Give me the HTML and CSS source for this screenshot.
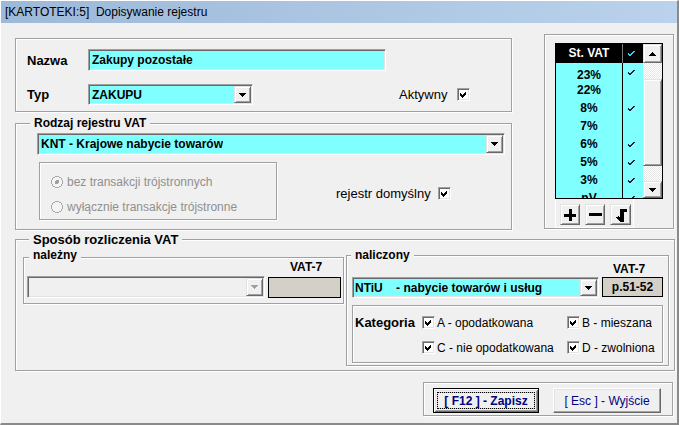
FILE: index.html
```html
<!DOCTYPE html>
<html lang="pl">
<head>
<meta charset="utf-8">
<title>Dopisywanie rejestru</title>
<link rel="stylesheet" href="styles.css">
</head>
<body>
<div class="window">
  <div class="titlebar">[KARTOTEKI:5]&nbsp; Dopisywanie rejestru</div>
  <div class="client">
    <div class="top">
      <div class="leftcol">
        <div class="group g-name">
          <div class="row r1">
            <span class="lbl">Nazwa</span>
            <div class="edit cyan w-nazwa">Zakupy pozostałe</div>
          </div>
          <div class="row r2">
            <span class="lbl">Typ</span>
            <div class="combo cyan w-typ"><span class="cval">ZAKUPU</span><span class="ddbtn"><svg width="7" height="4" viewBox="0 0 7 4"><path d="M0 0h7L3.5 4z" fill="#000"/></svg></span></div>
            <span class="txt aktyw">Aktywny</span>
            <span class="chk"><svg width="7" height="7" viewBox="0 0 7 7"><polygon points="0,2 2,4 6,0 6,3 2,7 0,5" fill="#000"/></svg></span>
          </div>
        </div>
        <div class="group g-rodzaj">
          <span class="legend lg-rodzaj">Rodzaj rejestru VAT</span>
          <div class="combo cyan w-knt"><span class="cval">KNT - Krajowe nabycie towarów</span><span class="ddbtn"><svg width="7" height="4" viewBox="0 0 7 4"><path d="M0 0h7L3.5 4z" fill="#000"/></svg></span></div>
          <div class="row r3">
            <div class="radiobox">
              <div class="radio"><svg width="12" height="12" viewBox="0 0 12 12"><circle cx="6" cy="6" r="5.5" fill="#f4f4f4" stroke="#a8a8a8"/><circle cx="6" cy="6" r="2" fill="#a0a0a0"/></svg><span>bez transakcji trójstronnych</span></div>
              <div class="radio"><svg width="12" height="12" viewBox="0 0 12 12"><circle cx="6" cy="6" r="5.5" fill="#f4f4f4" stroke="#a8a8a8"/></svg><span>wyłącznie transakcje trójstronne</span></div>
            </div>
            <div class="domysl">
              <span class="txt">rejestr domyślny</span>
              <span class="chk"><svg width="7" height="7" viewBox="0 0 7 7"><polygon points="0,2 2,4 6,0 6,3 2,7 0,5" fill="#000"/></svg></span>
            </div>
          </div>
        </div>
      </div>
      <div class="group g-stawki">
        <div class="grid">
          <div class="gtable">
            <div class="grow ghead"><span class="c1">St. VAT</span><span class="c2"><svg width="8" height="7" viewBox="0 0 8 7"><polyline points="0.8,3.5 3,5.8 7.2,1" fill="none" stroke="#33ccff" stroke-width="1.4"/></svg></span></div>
            <div class="grow first"><span class="c1">23%</span><span class="c2"><svg width="8" height="7" viewBox="0 0 8 7"><polyline points="0.8,3.5 3,5.8 7.2,1" fill="none" stroke="#1a1a50" stroke-width="1.2"/></svg></span></div>
            <div class="grow"><span class="c1">22%</span><span class="c2"></span></div>
            <div class="grow"><span class="c1">8%</span><span class="c2"><svg width="8" height="7" viewBox="0 0 8 7"><polyline points="0.8,3.5 3,5.8 7.2,1" fill="none" stroke="#1a1a50" stroke-width="1.2"/></svg></span></div>
            <div class="grow"><span class="c1">7%</span><span class="c2"></span></div>
            <div class="grow"><span class="c1">6%</span><span class="c2"><svg width="8" height="7" viewBox="0 0 8 7"><polyline points="0.8,3.5 3,5.8 7.2,1" fill="none" stroke="#1a1a50" stroke-width="1.2"/></svg></span></div>
            <div class="grow"><span class="c1">5%</span><span class="c2"><svg width="8" height="7" viewBox="0 0 8 7"><polyline points="0.8,3.5 3,5.8 7.2,1" fill="none" stroke="#1a1a50" stroke-width="1.2"/></svg></span></div>
            <div class="grow"><span class="c1">3%</span><span class="c2"><svg width="8" height="7" viewBox="0 0 8 7"><polyline points="0.8,3.5 3,5.8 7.2,1" fill="none" stroke="#1a1a50" stroke-width="1.2"/></svg></span></div>
            <div class="grow"><span class="c1">nV</span><span class="c2"><svg width="8" height="7" viewBox="0 0 8 7"><polyline points="0.8,3.5 3,5.8 7.2,1" fill="none" stroke="#1a1a50" stroke-width="1.2"/></svg></span></div>
          </div>
          <div class="vscroll">
            <span class="sbtn sb-up"><svg width="7" height="4" viewBox="0 0 7 4"><path d="M0 4h7L3.5 0z" fill="#000"/></svg></span>
            <span class="track t1"></span>
            <span class="sbtn thumb"></span>
            <span class="track t2"></span>
            <span class="sbtn sb-down"><svg width="7" height="4" viewBox="0 0 7 4"><path d="M0 0h7L3.5 4z" fill="#000"/></svg></span>
          </div>
        </div>
        <div class="gbtns">
          <span class="tbtn"><svg width="12" height="12" viewBox="0 0 12 12"><path d="M4.5 0h3v4.5H12v3H7.5V12h-3V7.5H0v-3h4.5z" fill="#000"/></svg></span>
          <span class="tbtn"><svg width="13" height="3" viewBox="0 0 13 3"><rect width="13" height="3" fill="#000"/></svg></span>
          <span class="tbtn tw"><svg width="12" height="14" viewBox="0 0 12 14"><path d="M5 1h7v3H9V14H5.5L1.5 9.5 3.5 8 5 9.8V1z" fill="#000"/></svg></span>
        </div>
      </div>
    </div>

    <div class="group g-sposob">
      <span class="legend lg-sposob">Sposób rozliczenia VAT</span>
      <div class="group g-nalezny">
        <span class="legend lg-nalezny">należny</span>
        <div class="vat7 v-a">VAT-7</div>
        <div class="nrow">
          <div class="combo dis w-nal"><span class="cval"></span><span class="ddbtn"><svg width="7" height="4" viewBox="0 0 7 4"><path d="M0 0h7L3.5 4z" fill="#a0a0a0"/></svg></span></div>
          <div class="pbox pb-a"></div>
        </div>
      </div>
      <div class="group g-naliczony">
        <span class="legend lg-naliczony">naliczony</span>
        <div class="vat7 v-b">VAT-7</div>
        <div class="nrow nrow-b">
          <div class="combo cyan w-nalicz"><span class="cval pre">NTiU    - nabycie towarów i usług</span><span class="ddbtn"><svg width="7" height="4" viewBox="0 0 7 4"><path d="M0 0h7L3.5 4z" fill="#000"/></svg></span></div>
          <div class="pbox pb-b">p.51-52</div>
        </div>
        <div class="katbox">
          <span class="katlbl">Kategoria</span>
          <span class="citem"><span class="chk"><svg width="7" height="7" viewBox="0 0 7 7"><polygon points="0,2 2,4 6,0 6,3 2,7 0,5" fill="#000"/></svg></span>A - opodatkowana</span>
          <span class="citem"><span class="chk"><svg width="7" height="7" viewBox="0 0 7 7"><polygon points="0,2 2,4 6,0 6,3 2,7 0,5" fill="#000"/></svg></span>B - mieszana</span>
          <span></span>
          <span class="citem"><span class="chk"><svg width="7" height="7" viewBox="0 0 7 7"><polygon points="0,2 2,4 6,0 6,3 2,7 0,5" fill="#000"/></svg></span>C - nie opodatkowana</span>
          <span class="citem"><span class="chk"><svg width="7" height="7" viewBox="0 0 7 7"><polygon points="0,2 2,4 6,0 6,3 2,7 0,5" fill="#000"/></svg></span>D - zwolniona</span>
        </div>
      </div>
    </div>

    <div class="group btnbar">
      <span class="btn btn-def"><span class="focus">[ F12 ] - Zapisz</span></span>
      <span class="btn btn-esc">[ Esc ] - Wyjście</span>
    </div>
  </div>
</div>
</body>
</html>
```

FILE: styles.css
```css
* { box-sizing: border-box; }
body {
  margin: 0;
  font-family: "Liberation Sans", Arial, sans-serif;
  font-size: 12px;
  color: #000;
  background: #f0f0f0;
}
svg { display: block; shape-rendering: crispEdges; }
.window {
  width: 679px;
  height: 425px;
  border-style: solid;
  border-width: 1px 2px 2px 1px;
  border-color: #fff #8a8a8a #8a8a8a #fff;
  background: #f0f0f0;
  overflow: hidden;
}
.titlebar {
  height: 22px;
  line-height: 22px;
  padding-left: 4px;
  background: linear-gradient(to right, #9db9d9, #bad2eb);
  font-size: 12px;
  white-space: nowrap;
}
.client { padding: 11px 0 0 14px; }
.top { display: flex; align-items: flex-start; }
.leftcol { width: 497px; margin-top: 4px; }

.group {
  position: relative;
  border: 1px solid #a0a0a0;
  box-shadow: 1px 1px 0 #fff, inset 1px 1px 0 #fff;
}
.legend {
  position: absolute;
  background: #f0f0f0;
  padding: 0 4px;
  font-weight: bold;
  line-height: 14px;
  white-space: nowrap;
}

.g-name { height: 74px; padding: 10px 0 0 11px; }
.row { display: flex; align-items: center; }
.r1 { height: 22px; }
.r2 { height: 21px; margin-top: 13px; }
.lbl { width: 61px; font-size: 13px; font-weight: bold; }
.txt { font-size: 13px; white-space: nowrap; }
.aktyw { margin-left: 146px; margin-right: 10px; }

.edit, .combo {
  display: flex;
  align-items: center;
  border: 1px solid;
  border-color: #a0a0a0 #fff #fff #a0a0a0;
  box-shadow: inset 1px 1px 0 #696969, inset -1px -1px 0 #e3e3e3;
  font-weight: bold;
  font-size: 12px;
  white-space: nowrap;
}
.edit { padding-left: 3px; }
.combo { padding: 1px 1px 1px 3px; justify-content: space-between; }
.cyan { background: #80ffff; }
.dis { background: #f0f0f0; }
.pre { white-space: pre; }
.cval { overflow: hidden; }
.ddbtn {
  flex: none;
  width: 17px;
  height: 100%;
  display: flex;
  align-items: center;
  justify-content: center;
  background: #f0f0f0;
  border: 1px solid;
  border-color: #e3e3e3 #696969 #696969 #e3e3e3;
  box-shadow: inset 1px 1px 0 #fff, inset -1px -1px 0 #a0a0a0;
}
.w-nazwa { width: 298px; height: 22px; }
.w-typ { width: 165px; height: 21px; }
.w-knt { width: 468px; height: 22px; }
.w-nal { width: 238px; height: 22px; }
.w-nalicz { width: 247px; height: 21px; padding-left: 2px; }

.chk {
  flex: none;
  width: 13px;
  height: 13px;
  display: flex;
  align-items: center;
  justify-content: center;
  background: #fff;
  border: 1px solid;
  border-color: #a0a0a0 #fff #fff #a0a0a0;
  box-shadow: inset 1px 1px 0 #696969, inset -1px -1px 0 #e3e3e3;
}

.g-rodzaj { height: 107px; margin-top: 11px; padding: 9px 0 0 21px; }
.lg-rodzaj { left: 14px; top: -8px; font-size: 12px; }
.r3 { align-items: flex-start; margin-top: 7px; margin-left: 2px; }
.radiobox {
  width: 238px;
  height: 58px;
  border: 1px solid #a0a0a0;
  box-shadow: 1px 1px 0 #fff, inset 1px 1px 0 #fff;
  padding: 13px 0 0 11px;
}
.radio { display: flex; align-items: center; height: 12px; color: #8f8f8f; white-space: nowrap; }
.radio + .radio { margin-top: 13px; }
.radio span { margin-left: 4px; }
.domysl { display: flex; align-items: center; gap: 7px; margin-left: 59px; margin-top: 25px; height: 13px; }

.g-stawki { width: 130px; height: 195px; margin-left: 32px; padding: 8px 0 0 10px; }
.grid {
  width: 108px;
  height: 156px;
  border: 1px solid #000;
  display: flex;
  overflow: hidden;
  background: #80ffff;
}
.gtable { width: 87px; }
.grow { display: flex; height: 18px; }
.ghead { height: 19px; background: #000; color: #fff; }
.c1 {
  width: 67px;
  border-right: 1px solid #000;
  text-align: center;
  line-height: 18px;
  font-weight: bold;
}
.ghead .c1 { line-height: 19px; border-right-color: #7a7a7a; }
.first .c1 { line-height: 24px; }
.c2 { width: 20px; display: flex; align-items: center; padding-left: 4px; }
.vscroll { width: 19px; display: flex; flex-direction: column; }
.sbtn {
  display: flex;
  align-items: center;
  justify-content: center;
  background: #f0f0f0;
  border: 1px solid;
  border-color: #e3e3e3 #696969 #696969 #e3e3e3;
  box-shadow: inset 1px 1px 0 #fff, inset -1px -1px 0 #a0a0a0;
}
.sb-up { height: 19px; }
.thumb { height: 87px; }
.sb-down { height: 17px; }
.track {
  background-color: #fff;
  background-image: repeating-conic-gradient(#e6e6e6 0 25%, #fff 0 50%);
  background-size: 2px 2px;
}
.t1 { height: 16px; }
.t2 { height: 15px; }

.gbtns {
  width: 79px;
  height: 29px;
  border: 1px solid #fff;
  border-top: none;
  display: flex;
  gap: 5px;
  padding: 5px 0 0 4px;
}
.tbtn {
  width: 20px;
  height: 21px;
  display: flex;
  align-items: center;
  justify-content: center;
  background: #f0f0f0;
  border: 1px solid;
  border-color: #e3e3e3 #696969 #696969 #e3e3e3;
  box-shadow: inset 1px 1px 0 #fff, inset -1px -1px 0 #a0a0a0;
}
.tw { width: 21px; }

.g-sposob {
  width: 660px;
  height: 132px;
  margin-top: 9px;
  display: flex;
  align-items: flex-start;
  padding-left: 7px;
}
.lg-sposob { left: 13px; top: -8px; font-size: 13px; line-height: 16px; }
.g-nalezny { width: 321px; height: 47px; margin-top: 17px; padding-left: 3px; }
.lg-nalezny { left: 5px; top: -10px; font-size: 12px; }
.g-naliczony { width: 323px; height: 111px; margin-top: 15px; margin-left: 2px; padding-left: 5px; }
.lg-naliczony { left: 4px; top: -8px; font-size: 12px; }
.vat7 { font-weight: bold; font-size: 12px; white-space: nowrap; }
.v-a { height: 18px; line-height: 18px; margin-left: 263px; }
.v-b { height: 21px; padding-top: 6px; line-height: 14px; margin-left: 261px; }
.nrow { display: flex; align-items: flex-start; gap: 3px; }
.pbox {
  background: #d4d0c8;
  border: 1px solid #000;
  font-weight: bold;
  display: flex;
  align-items: center;
  justify-content: center;
}
.pb-a { width: 73px; height: 21px; margin-top: 1px; }
.pb-b { width: 61px; height: 20px; }
.katbox {
  width: 311px;
  height: 58px;
  margin-top: 7px;
  border: 1px solid #a0a0a0;
  box-shadow: 1px 1px 0 #fff, inset 1px 1px 0 #fff;
  padding: 4px 0 0 2px;
  display: grid;
  grid-template-columns: 67px 145px auto;
  grid-auto-rows: 25px;
  align-items: center;
}
.katlbl { font-size: 13px; font-weight: bold; }
.citem { display: flex; align-items: center; gap: 2px; white-space: nowrap; font-size: 12px; }

.btnbar {
  width: 250px;
  height: 34px;
  margin-top: 11px;
  margin-left: 408px;
  display: flex;
  gap: 14px;
  padding: 5px 0 0 9px;
}
.btn {
  height: 25px;
  display: flex;
  align-items: center;
  justify-content: center;
  color: #000080;
  font-size: 12px;
  white-space: nowrap;
  background: #f0f0f0;
}
.btn-def {
  width: 106px;
  border: 1px solid #000;
  box-shadow: inset 1px 1px 0 #fff, inset -1px -1px 0 #696969, inset 2px 2px 0 #e3e3e3, inset -2px -2px 0 #a0a0a0;
  padding: 3px;
  align-items: stretch;
}
.focus {
  flex: 1;
  display: flex;
  align-items: center;
  justify-content: center;
  font-weight: bold;
  border: 1px dotted #000;
  background: linear-gradient(#f0f0f0, #f0f0f0) padding-box, linear-gradient(#e8d000, #e8d000) border-box;
}
.btn-esc {
  width: 108px;
  border: 1px solid;
  border-color: #fff #696969 #696969 #fff;
  box-shadow: inset -1px -1px 0 #a0a0a0, inset 1px 1px 0 #e3e3e3;
}
```
